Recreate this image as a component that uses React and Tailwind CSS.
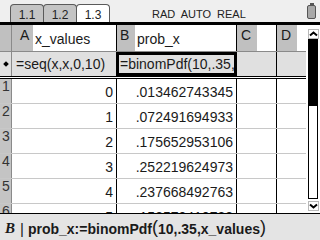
import React from 'react';

const rows = [
  ['1', '0', '.013462743345'],
  ['2', '1', '.072491694933'],
  ['3', '2', '.175652953106'],
  ['4', '3', '.252219624973'],
  ['5', '4', '.237668492763'],
  ['6', '5', '.153570410788'],
];

const Tab = ({ label, active }) => (
  <div
    className={`w-[34px] h-[18px] -ml-px first:ml-0 border border-b-0 border-[#5a5a5a] rounded-t-[4px] flex justify-center pt-[4px] text-[12px] leading-none text-[#222] ${
      active ? 'bg-white' : 'bg-[#c4c4c4]'
    }`}
  >
    {label}
  </div>
);

const Chevron = ({ down }) => (
  <svg width="9" height="6" viewBox="0 0 9 6">
    <polyline
      points={down ? '1,1.5 4.5,4.5 8,1.5' : '1,4.5 4.5,1.5 8,4.5'}
      fill="none"
      stroke="#000"
      strokeWidth="2"
    />
  </svg>
);

const App = () => {
  return (
    <div className="w-[320px] h-[240px] overflow-hidden bg-white flex flex-col font-['Liberation_Sans',Arial,sans-serif] text-[#1a1a1a]">
      {/* Top bar: tabs, mode, battery */}
      <div className="h-[22px] shrink-0 bg-[#efefef] flex">
        <div className="flex self-end pl-[10px]">
          <Tab label="1.1" />
          <Tab label="1.2" />
          <Tab label="1.3" active />
        </div>
        <div className="ml-[42px] pt-[9px] text-[11px] leading-none text-[#222] [word-spacing:3px]">
          RAD AUTO REAL
        </div>
        <div className="ml-auto mr-[4px] pt-[3px] flex flex-col items-center">
          <div className="w-[4px] h-[2px] bg-[#555]" />
          <div className="w-[9px] h-[14px] border border-[#555] rounded-[2px] bg-[#a8a8a8]" />
        </div>
      </div>
      <div className="h-[3px] shrink-0 bg-black" />

      {/* Sheet */}
      <div className="flex h-[188px] shrink-0 overflow-hidden">
        <div className="w-[306px] flex flex-col overflow-hidden">
          {/* Column headers */}
          <div className="h-[26px] shrink-0 grid grid-cols-[12px_105px_120px_40px_29px] text-[14px] leading-none">
            <div className="bg-[#c0c0c0] border-r border-[#8a8a8a]" />
            <div className="flex border-r border-black">
              <div className="w-[21px] bg-[#c0c0c0] pl-[8px] pt-[3px]">A</div>
              <div className="flex-1 bg-white pl-[2px] pt-[7px]">x_values</div>
            </div>
            <div className="flex border-r border-black">
              <div className="w-[18px] bg-[#c0c0c0] pl-[3px] pt-[3px]">B</div>
              <div className="flex-1 bg-white pl-[2px] pt-[7px]">prob_x</div>
            </div>
            <div className="flex border-r border-black">
              <div className="w-[20px] bg-[#c0c0c0] pl-[4px] pt-[3px]">C</div>
              <div className="flex-1 bg-white" />
            </div>
            <div className="flex">
              <div className="w-[20px] bg-[#c0c0c0] pl-[4px] pt-[3px]">D</div>
              <div className="flex-1 bg-white" />
            </div>
          </div>
          <div className="h-px shrink-0 bg-[#8a8a8a]" />

          {/* Formula row */}
          <div className="h-[24px] shrink-0 grid grid-cols-[12px_105px_120px_40px_29px] bg-[#e0e0e0] text-[14px] leading-[16px]">
            <div className="flex items-center justify-center border-r border-[#8a8a8a]">
              <div className="w-[4px] h-[4px] rotate-45 bg-black" />
            </div>
            <div className="flex items-center pl-[4px] border-r border-black whitespace-nowrap overflow-hidden">
              =seq(x,x,0,10)
            </div>
            <div className="flex items-center pl-[1px] border-[3px] border-black -ml-px whitespace-nowrap overflow-hidden">
              =binomPdf(10,.35,x_values)
            </div>
            <div className="border-r border-black" />
            <div />
          </div>
          <div className="h-px shrink-0 bg-black" />
          <div className="h-px shrink-0 bg-white" />
          <div className="h-px shrink-0 bg-black" />

          {/* Data rows */}
          {rows.map(([n, x, p]) => (
            <div
              key={n}
              className="h-[25px] shrink-0 grid grid-cols-[12px_105px_120px_40px_29px] border-b border-[#c8c8c8] text-[14px]"
            >
              <div className="bg-[#c4c4c4] pl-[2px] leading-[14px] text-[#333] border-r border-[#8a8a8a]">{n}</div>
              <div className="text-right pr-[3px] pt-[2px] leading-[22px] border-r border-black">{x}</div>
              <div className="text-right pr-[3px] pt-[2px] leading-[22px] border-r border-black">{p}</div>
              <div className="border-r border-black" />
              <div />
            </div>
          ))}
        </div>

        {/* Scrollbar */}
        <div className="w-[14px] flex flex-col items-center pt-[4px] bg-white">
          <div className="w-[11px] h-[10px] shrink-0 border border-[#b8b8b8] flex items-center justify-center">
            <Chevron />
          </div>
          <div className="w-[10px] h-[160px] shrink-0 border border-black flex flex-col">
            <div className="h-[66px] bg-black" />
          </div>
          <div className="mt-[2px] w-[11px] h-[10px] shrink-0 border border-[#b8b8b8] flex items-center justify-center">
            <Chevron down />
          </div>
        </div>
      </div>

      {/* Entry line */}
      <div className="h-[27px] shrink-0 border-t border-black bg-[#e4e4e4] flex items-center pl-[5px] pt-[3px] text-[14px] leading-none whitespace-nowrap">
        <span className="font-['Liberation_Serif',serif] font-bold italic text-[15px]">B</span>
        <span className="ml-[5px] font-normal text-[15px]">|</span>
        <span className="ml-[4px] font-bold">prob_x:=binomPdf</span>
        <span className="font-normal text-[18px] -mt-[3px]">(</span>
        <span className="font-bold">10,.35,x_values</span>
        <span className="font-normal text-[18px] -mt-[3px]">)</span>
      </div>
    </div>
  );
};

export default App;
